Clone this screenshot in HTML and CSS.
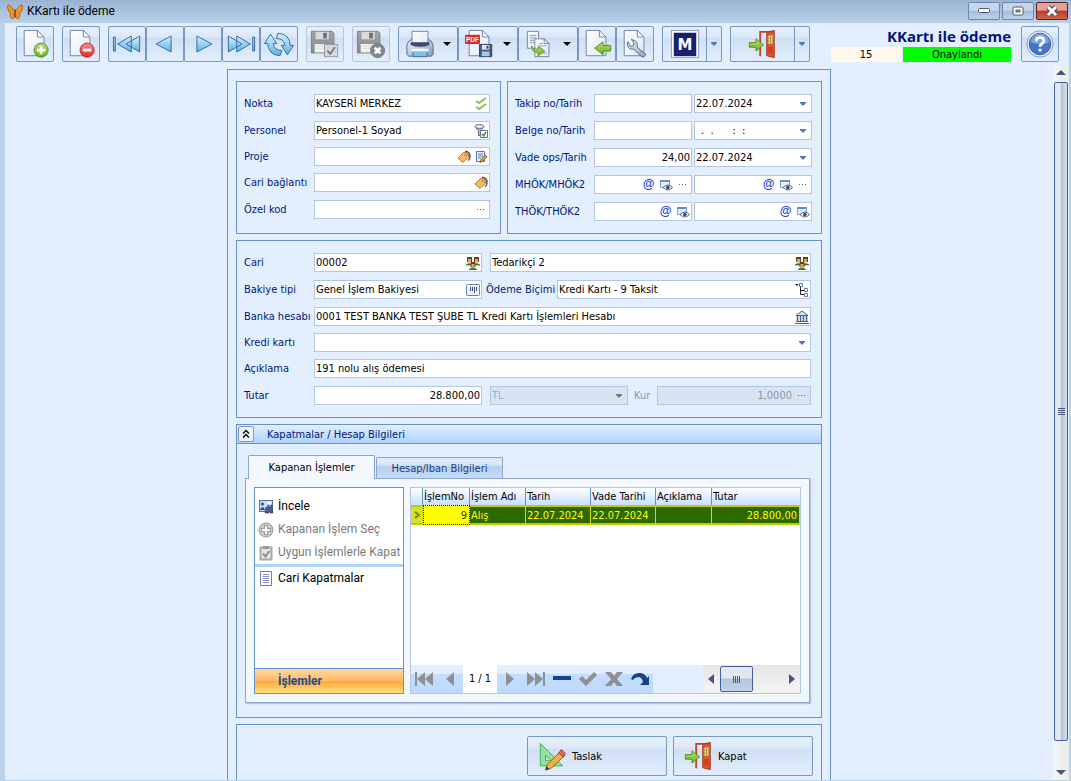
FILE: index.html
```html
<!DOCTYPE html>
<html lang="tr">
<head>
    <meta charset="UTF-8">
    <meta name="viewport" content="width=device-width, initial-scale=1.0">
    <title>KKartı ile ödeme</title>
    <link rel="stylesheet" href="styles.css">
</head>
<body>
    <!-- shared icons -->
    <svg class="sprite" aria-hidden="true">
        <defs>
            <linearGradient id="blue" x1="0" y1="0" x2="0" y2="1"><stop offset="0" stop-color="#d4f1fd"/><stop offset="1" stop-color="#5fb0e4"/></linearGradient>
            <linearGradient id="paper" x1="0" y1="0" x2="1" y2="1"><stop offset="0" stop-color="#fff"/><stop offset="1" stop-color="#e2e8f6"/></linearGradient>
            <linearGradient id="green" x1="0" y1="0" x2="0" y2="1"><stop offset="0" stop-color="#b6e36a"/><stop offset="1" stop-color="#6fae1f"/></linearGradient>
            <linearGradient id="red" x1="0" y1="0" x2="0" y2="1"><stop offset="0" stop-color="#ff8d8d"/><stop offset="1" stop-color="#e0262c"/></linearGradient>
            <linearGradient id="gray" x1="0" y1="0" x2="0" y2="1"><stop offset="0" stop-color="#a2a4a8"/><stop offset="1" stop-color="#86888c"/></linearGradient>
            <linearGradient id="steel" x1="0" y1="0" x2="1" y2="1"><stop offset="0" stop-color="#eef2f9"/><stop offset="1" stop-color="#8b9dbd"/></linearGradient>
        </defs>
        <symbol id="i-page" viewBox="0 0 32 32"><path d="M4.500 1.500h14l7 7v20h-21z" fill="url(#paper)" stroke="#6d7fb0"/><path d="M18.500 1.500v7h7z" fill="#fff" stroke="#6d7fb0"/></symbol>
        <symbol id="i-caret" viewBox="0 0 8 4"><path d="M0 0h8L4 4z"/></symbol>
        <symbol id="i-drop" viewBox="0 0 6 4"><path d="M0 0h6v1L3 4 0 1z" fill="#4f7ab3"/></symbol>
        <symbol id="i-dots" viewBox="0 0 10 2"><path d="M1 0h1v1H1zM4 0h1v1H4zM7 0h1v1H7z" fill="#3f6397"/></symbol>
        <symbol id="i-floppy" viewBox="0 0 32 32">
            <path d="M1.500 2.500h22l2 2v21h-24z" fill="url(#gray)" stroke="#7c7e82"/>
            <path d="M6 3h14v8H6z" fill="#d9dadc"/><path d="M14 4h4v6h-4z" fill="#6f7175"/>
            <path d="M5 16h17v9H5z" fill="#f2f3f4"/><path d="M7 18h13M7 20.500h13" stroke="#d2d3d5"/>
        </symbol>
        <symbol id="i-door" viewBox="0 0 32 32">
            <path d="M13 29V3h15" fill="none" stroke="#c8432a" stroke-width="2"/>
            <path d="M20 3.500l8-2v29l-8-2z" fill="#d9552b" stroke="#a8341c"/>
            <path d="M21.500 7l5-.5v9l-5 .5z" fill="#f3dfa8" stroke="#b9934a"/><path d="M24 7v9M21.500 10h5M21.500 13h5" stroke="#b9934a"/>
            <path d="M22 19l4 .5v7l-4-1z" fill="#c9431f"/>
            <path d="M1.500 14.500h7v-4l8 6.500-8 6.500v-4h-7z" fill="url(#green)" stroke="#4f8f1e"/>
        </symbol>
        <symbol id="i-people" viewBox="0 0 14 14">
            <path d="M0 9q3-3 6 0zM8 9q3-3 6 0zM3 14q4-5 8 0z" fill="#2f9a2f" stroke="#225f1d" stroke-width=".6"/>
            <path d="M1 1h5v5H1zM8 1h5v5H8zM4.500 6h5v5h-5z" fill="#6b3d18"/>
            <path d="M2 3h3v3.500H2zM9 3h3v3.500H9zM5.500 8h3v3.500h-3z" fill="#dba574"/>
        </symbol>
        <symbol id="i-tag" viewBox="0 0 14 14"><path d="M8 1.500q5 0 5 5 0 3-2 4" fill="none" stroke="#4a5068" stroke-width="1.500"/><path d="M1 8l5.500-5.500 4.500.2.500 4.300L6 12.500z" fill="#f9bb61" stroke="#b9752a"/><circle cx="9" cy="5" r="1" fill="#fff" stroke="#7a4b13" stroke-width=".6"/></symbol>
        <symbol id="i-eye" viewBox="0 0 14 14"><path d="M1.500 2.500h9v7h-9z" fill="#e9f0f9" stroke="#7f9cc4"/><path d="M1 2h10v2H1z" fill="#5f93ce"/><path d="M4 9.500q5-5 9.500 0-5 5-9.500 0z" fill="#eceff5" stroke="#59647e"/><circle cx="8.800" cy="9.500" r="1.800" fill="#39456a"/></symbol>
    </svg>

    <header class="titlebar">
        <svg class="app-icon" viewBox="0 0 16 16"><path d="M7.500 7L3 1.500Q0 0 .5 3.500L2 8l1.500 1L3 12l2 3 2-1.500zM8.500 7L13 1.500q3-1.500 2.500 2L14 8l-1.500 1 .5 3-2 3-2-1.500z" fill="#f7941d" stroke="#a3530a" stroke-width=".7"/><path d="M8 5v9" stroke="#5c2c08"/></svg>
        <span class="caption">KKartı ile ödeme</span>
        <div class="win-buttons">
            <button aria-label="Küçült"><svg width="12" height="6"><rect x=".5" y=".5" width="11" height="4" rx="1" fill="#fff" stroke="#4e5b6e"/></svg></button>
            <button aria-label="Büyüt"><svg width="12" height="10"><rect x="1" y="1" width="10" height="8" rx="1" fill="#fff" stroke="#4e5b6e" /><rect x="4" y="4" width="4" height="2" fill="#9fb4ce" stroke="#4e5b6e"/></svg></button>
            <button class="close" aria-label="Kapat"><svg width="14" height="12"><path d="M3 2l8 8M11 2l-8 8" stroke="#5a4048" stroke-width="5"/><path d="M3 2l8 8M11 2l-8 8" stroke="#fff" stroke-width="3"/></svg></button>
        </div>
    </header>

    <div class="window">
        <div class="toolbar">
            <div class="tools">
                <div class="group">
                    <button class="tool" aria-label="Yeni"><svg viewBox="0 0 32 32"><use href="#i-page"/><circle cx="22.500" cy="22.500" r="7.500" fill="url(#green)" stroke="#4e8a1a"/><path d="M22.500 18v9M18 22.500h9" stroke="#fff" stroke-width="3"/></svg></button>
                </div>
                <div class="group">
                    <button class="tool" aria-label="Sil"><svg viewBox="0 0 32 32"><use href="#i-page"/><circle cx="22.500" cy="22.500" r="7.500" fill="url(#red)" stroke="#b8292c"/><path d="M18 22.500h9" stroke="#fff" stroke-width="3"/></svg></button>
                </div>
                <div class="group">
                    <button class="tool" aria-label="İlk"><svg viewBox="0 0 32 32" fill="url(#blue)" stroke="#31689f"><path d="M1.500 8.500h2v15h-2zM20.500 7.500v17L6 16zM29.500 7.500v17L15 16z"/></svg></button>
                    <button class="tool" aria-label="Önceki"><svg viewBox="0 0 32 32" fill="url(#blue)" stroke="#31689f"><path d="M22.500 7.500v17L6.500 16z"/></svg></button>
                    <button class="tool" aria-label="Sonraki"><svg viewBox="0 0 32 32" fill="url(#blue)" stroke="#31689f"><path d="M9.500 7.500v17L25.500 16z"/></svg></button>
                    <button class="tool" aria-label="Son"><svg viewBox="0 0 32 32" fill="url(#blue)" stroke="#31689f"><path d="M28.500 8.500h2v15h-2zM11.500 7.500v17L26 16zM2.500 7.500v17L17 16z"/></svg></button>
                    <button class="tool" aria-label="Yenile"><svg viewBox="0 0 32 32" fill="url(#blue)" stroke="#31689f"><path d="M.5 15.500L7 5.500l6.500 10H10q0 7 9 7.500l-2 5.500Q4.500 27.500 4 15.500z"/><path d="M31.500 17.500L25 27.500l-6.500-10H22q0-7-9-7.500l2-5.500q12.500 1 13 13z"/></svg></button>
                </div>
                <div class="group">
                    <button class="tool" disabled aria-label="Kaydet"><svg viewBox="0 0 32 32"><use href="#i-floppy"/><rect x="15.500" y="16.500" width="14" height="13" fill="#d6d7d9" stroke="#9a9b9e"/><path d="M18.500 23l3 3.500 5-7" fill="none" stroke="#77797d" stroke-width="2"/></svg></button>
                </div>
                <div class="group">
                    <button class="tool" disabled aria-label="Vazgeç"><svg viewBox="0 0 32 32"><use href="#i-floppy"/><circle cx="23" cy="23" r="7.500" fill="#85878b" stroke="#77797d"/><path d="M20 20l6 6M26 20l-6 6" stroke="#fff" stroke-width="3"/></svg></button>
                </div>
                <div class="group">
                    <button class="tool with-menu" aria-label="Yazdır">
                        <svg viewBox="0 0 32 32"><path d="M4 13l3-2h18l3 2 2 4v10l-2 2H4l-2-2V17z" fill="url(#steel)" stroke="#53648c"/><path d="M7.500 2.500h17v13h-17z" fill="url(#paper)" stroke="#6d7fb0"/><path d="M6 14h20v3q-10 4-20 0z" fill="#3e4c6c"/><path d="M8.500 23.500h15v6h-15z" fill="#7fc0ee" stroke="#3f6fa6"/><path d="M7 21h18v3H7z" fill="#f6f8fc"/></svg>
                        <svg class="caret"><use href="#i-caret"/></svg>
                    </button>
                    <button class="tool with-menu" aria-label="PDF kaydet">
                        <svg viewBox="0 0 32 32"><use href="#i-page"/><rect x="0" y="6" width="16" height="10" rx="1" fill="#d32f30"/><text class="pdf-text" x="1" y="14">PDF</text><path d="M15.500 16.500h13v13h-13z" fill="#4a5a86" stroke="#2e3b60"/><path d="M18 17h8v5h-8z" fill="#dfe6f2"/><path d="M18 24h8v5h-8z" fill="#9fd0f0"/><path d="M23 18h2v3h-2z" fill="#2e3b60"/></svg>
                        <svg class="caret"><use href="#i-caret"/></svg>
                    </button>
                    <button class="tool with-menu" aria-label="Kopyala">
                        <svg viewBox="0 0 32 32"><path d="M2.500 2.500h12v18h-12z" fill="url(#paper)" stroke="#6d7fb0"/><path d="M5 7h7M5 9.500h7M5 12h5M5 14.500h5" stroke="#7f93c2"/><path d="M10.500 10.500h10l5 5v14h-15z" fill="url(#paper)" stroke="#6d7fb0"/><path d="M20.500 10.500v5h5z" fill="#fff" stroke="#6d7fb0"/><path d="M15 15.500h4M15 18h8M15 25.500h8" stroke="#7f93c2"/><path d="M7 18q1 4 7 3.500v-3.500l7 5.500-7 5v-3.500q-7 0-7-7z" fill="url(#green)" stroke="#5c951f"/></svg>
                        <svg class="caret"><use href="#i-caret"/></svg>
                    </button>
                    <button class="tool" aria-label="Aktar"><svg viewBox="0 0 32 32"><use href="#i-page"/><path d="M30.500 17.500h-8v-4l-9 7 9 7v-4h8z" fill="url(#green)" stroke="#4f8f1e"/></svg></button>
                    <button class="tool" aria-label="Ayarlar"><svg viewBox="0 0 32 32"><use href="#i-page"/><path d="M8.500 13.500q-2 5 2 7.500 2 1 4 .5l8.500 8q3.500 1 4.500-2.500l-9-7.500q1-6.500-5-8l-1.500-.5 3 4-1 3-3 .5z" fill="url(#steel)" stroke="#53648c"/></svg></button>
                </div>
                <div class="group">
                    <button class="tool split" aria-label="M"><svg viewBox="0 0 32 32"><rect x="1.500" y="1.500" width="29" height="29" fill="#fff" stroke="#8d9cc0"/><rect x="4" y="4" width="24" height="25" fill="#1a2070"/><text class="m-text" x="8" y="22">M</text></svg></button>
                    <button class="tool split-arrow" aria-label="M menüsü"><svg class="drop"><use href="#i-drop"/></svg></button>
                </div>
                <div class="group">
                    <button class="tool split exit" aria-label="Çıkış"><svg><use href="#i-door"/></svg></button>
                    <button class="tool split-arrow" aria-label="Çıkış menüsü"><svg class="drop"><use href="#i-drop"/></svg></button>
                </div>
            </div>
            <div class="status">
                <h1>KKartı ile ödeme</h1>
                <div class="status-line">
                    <span class="status-no">15</span>
                    <span class="status-state">Onaylandı</span>
                </div>
            </div>
            <button class="tool help" aria-label="Yardım"><svg viewBox="0 0 32 32"><circle cx="16" cy="16" r="14" fill="#e6ecf7" stroke="#8296bf"/><circle cx="16" cy="16" r="11.500" fill="#4577c6" stroke="#3560a8"/><path d="M6 14a10 9 0 0 1 20 0q-10 4-20 0z" fill="#7aa3e0"/><path d="M12 13q0-4 4-4t4 3.500q0 2-2 3.200T16 19" fill="none" stroke="#fff" stroke-width="3"/><rect x="14.500" y="21" width="3" height="3" fill="#fff"/></svg></button>
        </div>

        <div class="content">
            <main>
                <form class="form">
                    <div class="top-panels">
                        <section class="panel">
                            <div class="row">
                                <label for="nokta">Nokta</label>
                                <div class="field"><input id="nokta" value="KAYSERİ MERKEZ"><button type="button" class="in" aria-label="Nokta seç"><svg viewBox="0 0 14 14" fill="none" stroke="#8cc152" stroke-width="2"><path d="M2 4l3 2 7-5M2 10l3 2 7-5"/></svg></button></div>
                            </div>
                            <div class="row tight">
                                <label for="personel">Personel</label>
                                <div class="field"><input id="personel" value="Personel-1 Soyad"><button type="button" class="in" aria-label="Personel seç"><svg viewBox="0 0 14 14"><path d="M1 3l3.500 4v5l2-1V7L10 3z" fill="#b9c0cc" stroke="#66718a"/><ellipse cx="5.500" cy="2.500" rx="4.500" ry="2" fill="#e8ebf1" stroke="#66718a"/><path d="M6.500 6.500h7v7h-7z" fill="#fff" stroke="#6474a0"/><path d="M8 10l1.500 2L12 8" fill="none" stroke="#3b9a2c" stroke-width="1.500"/></svg></button></div>
                            </div>
                            <div class="row tight">
                                <label for="proje">Proje</label>
                                <div class="field"><input id="proje"><button type="button" class="in" aria-label="Proje seç"><svg><use href="#i-tag"/></svg></button><button type="button" class="in" aria-label="Proje düzenle"><svg viewBox="0 0 14 14"><path d="M2.500 1.500h8v10h-8z" fill="#eef4fc" stroke="#5577b0"/><path d="M4 4h5M4 6h5M4 8h3" stroke="#4a7fc4"/><path d="M6 12.500l1-3L11 5l2 2-4.500 4.500z" fill="#e79a3a" stroke="#8a5418" stroke-width=".8"/></svg></button></div>
                            </div>
                            <div class="row">
                                <label for="baglanti">Cari bağlantı</label>
                                <div class="field"><input id="baglanti"><button type="button" class="in" aria-label="Bağlantı seç"><svg><use href="#i-tag"/></svg></button></div>
                            </div>
                            <div class="row">
                                <label for="ozelkod">Özel kod</label>
                                <div class="field"><input id="ozelkod"><button type="button" class="in" aria-label="Özel kod seç"><svg class="dots"><use href="#i-dots"/></svg></button></div>
                            </div>
                        </section>

                        <section class="panel right">
                            <div class="row">
                                <label for="takip">Takip no/Tarih</label>
                                <div class="field"><input id="takip"></div>
                                <div class="field date"><input aria-label="Takip tarihi" value="22.07.2024"><button type="button" class="in" aria-label="Takvim"><svg class="drop"><use href="#i-drop"/></svg></button></div>
                            </div>
                            <div class="row">
                                <label for="belge">Belge no/Tarih</label>
                                <div class="field"><input id="belge"></div>
                                <div class="field date"><input aria-label="Belge tarihi" class="blank-date" value=". &nbsp;.&nbsp;&nbsp;&nbsp;&nbsp;&nbsp;&nbsp;: &nbsp;:"><button type="button" class="in" aria-label="Takvim"><svg class="drop"><use href="#i-drop"/></svg></button></div>
                            </div>
                            <div class="row">
                                <label for="vade">Vade ops/Tarih</label>
                                <div class="field"><input id="vade" class="num" value="24,00"></div>
                                <div class="field date"><input aria-label="Vade tarihi" value="22.07.2024"><button type="button" class="in" aria-label="Takvim"><svg class="drop"><use href="#i-drop"/></svg></button></div>
                            </div>
                            <div class="row">
                                <label for="mhok">MHÖK/MHÖK2</label>
                                <div class="field"><input id="mhok"><button type="button" class="in at">@</button><button type="button" class="in" aria-label="Göster"><svg><use href="#i-eye"/></svg></button><button type="button" class="in" aria-label="Seç"><svg class="dots"><use href="#i-dots"/></svg></button></div>
                                <div class="field date"><input aria-label="MHÖK2"><button type="button" class="in at">@</button><button type="button" class="in" aria-label="Göster"><svg><use href="#i-eye"/></svg></button><button type="button" class="in" aria-label="Seç"><svg class="dots"><use href="#i-dots"/></svg></button></div>
                            </div>
                            <div class="row">
                                <label for="thok">THÖK/THÖK2</label>
                                <div class="field"><input id="thok"><button type="button" class="in at">@</button><button type="button" class="in" aria-label="Göster"><svg><use href="#i-eye"/></svg></button></div>
                                <div class="field date"><input aria-label="THÖK2"><button type="button" class="in at">@</button><button type="button" class="in" aria-label="Göster"><svg><use href="#i-eye"/></svg></button></div>
                            </div>
                        </section>
                    </div>

                    <section class="panel">
                        <div class="row">
                            <label for="cari">Cari</label>
                            <div class="field half"><input id="cari" value="00002"><button type="button" class="in" aria-label="Cari seç"><svg><use href="#i-people"/></svg></button></div>
                            <div class="field"><input aria-label="Cari adı" value="Tedarikçi 2"><button type="button" class="in" aria-label="Cari seç"><svg><use href="#i-people"/></svg></button></div>
                        </div>
                        <div class="row">
                            <label for="bakiye">Bakiye tipi</label>
                            <div class="field half"><input id="bakiye" value="Genel İşlem Bakiyesi"><button type="button" class="in" aria-label="Bakiye tipi seç"><svg viewBox="0 0 14 14"><rect x=".5" y="1.500" width="13" height="11" rx="1" fill="#eef3fb" stroke="#6f7fb0"/><path d="M4.500 4v4M6.500 4v4M8.500 4v6M10.500 4v4" stroke="#3f4f86"/></svg></button></div>
                            <label class="second" for="odeme">Ödeme Biçimi</label>
                            <div class="field"><input id="odeme" value="Kredi Kartı - 9 Taksit"><button type="button" class="in" aria-label="Ödeme biçimi seç"><svg viewBox="0 0 14 14"><path d="M0 1h4L2 3z" fill="#222"/><path d="M5.500 2v9.500H10M5.500 7.500H10" fill="none" stroke="#222"/><path d="M4.500.5h3v3h-3zM9.500 5.500h3v3h-3zM9.500 10.500h3v3h-3z" fill="#fff" stroke="#6474a0"/></svg></button></div>
                        </div>
                        <div class="row tight">
                            <label for="banka">Banka hesabı</label>
                            <div class="field"><input id="banka" value="0001 TEST BANKA TEST ŞUBE TL Kredi Kartı İşlemleri Hesabı"><button type="button" class="in" aria-label="Banka hesabı seç"><svg viewBox="0 0 14 14"><path d="M1 5.500h12L7 1z" fill="#d6e4f4" stroke="#3a6598"/><path d="M2.500 6v5M5.500 6v5M8.500 6v5M11.500 6v5" stroke="#3a6598" stroke-width="1.500"/><path d="M1 11.500h12M0 13.500h14" stroke="#3a6598"/></svg></button></div>
                        </div>
                        <div class="row tight">
                            <label for="kart">Kredi kartı</label>
                            <div class="field"><select id="kart"><option></option></select><span class="in"><svg class="drop"><use href="#i-drop"/></svg></span></div>
                        </div>
                        <div class="row">
                            <label for="aciklama">Açıklama</label>
                            <div class="field"><input id="aciklama" value="191 nolu alış ödemesi"></div>
                        </div>
                        <div class="row">
                            <label for="tutar">Tutar</label>
                            <div class="field half"><input id="tutar" class="num" value="28.800,00"></div>
                            <div class="field currency off"><select aria-label="Para birimi" disabled><option>TL</option></select><span class="in"><svg class="drop"><use href="#i-drop"/></svg></span></div>
                            <label class="rate" for="kur">Kur</label>
                            <div class="field off"><input id="kur" class="num" value="1,0000" disabled><button type="button" class="in" disabled aria-label="Kur seç"><svg class="dots"><use href="#i-dots"/></svg></button></div>
                        </div>
                    </section>

                    <section class="panel closings">
                        <div class="closings-head">
                            <button type="button" class="collapse" aria-label="Daralt"><svg viewBox="0 0 8 10" fill="none" stroke="#111" stroke-width="1.500"><path d="M1 4.500l3-3 3 3M1 8.500l3-3 3 3"/></svg></button>
                            <h2>Kapatmalar / Hesap Bilgileri</h2>
                        </div>
                        <div class="tabs">
                            <button type="button" class="tab active">Kapanan İşlemler</button>
                            <button type="button" class="tab">Hesap/Iban Bilgileri</button>
                        </div>
                        <div class="tab-page">
                            <nav class="side">
                                <button type="button"><svg viewBox="0 0 16 16"><rect x="1.500" y="1.500" width="13" height="11" fill="#c6dcf5" stroke="#54719f"/><circle cx="4.500" cy="5" r="1.500" fill="#324a7c"/><path d="M2 11q2.500-6 5 0z" fill="#324a7c"/><path d="M9 4h4" stroke="#fff" stroke-width="2"/><path d="M8 8h2v-2h1v2h2v-2h1v2l1 6h-3v-3h-1v3H7z" fill="#4a5f92" stroke="#28395f" stroke-width=".6"/></svg>İncele</button>
                                <button type="button" disabled><svg viewBox="0 0 16 16"><circle cx="8" cy="8" r="7" fill="#c9c9c9" stroke="#9a9a9a"/><path d="M8 3v10M3 8h10" stroke="#9a9a9a" stroke-width="4"/><path d="M8 4v8M4 8h8" stroke="#fff" stroke-width="2"/></svg>Kapanan İşlem Seç</button>
                                <button type="button" disabled><svg viewBox="0 0 16 16"><path d="M2.500 2.500h11v12h-11z" fill="#e5e5e5" stroke="#aaa" stroke-width="2"/><path d="M5 1h6v3H5z" fill="#999"/><path d="M5 8.500l2.500 3L11.500 6" fill="none" stroke="#8d8d8d" stroke-width="2"/></svg>Uygun İşlemlerle Kapat</button>
                                <hr>
                                <button type="button"><svg viewBox="0 0 16 16"><path d="M2.500.5h11v14h-11z" fill="#fff" stroke="#6a7cb2"/><path d="M5 3.500h6M5 5.500h6M5 7.500h6M5 9.500h6M5 11.500h6" stroke="#8093c6"/></svg>Cari Kapatmalar</button>
                                <div class="side-foot">İşlemler</div>
                            </nav>
                            <div class="grid">
                                <table>
                                    <colgroup><col class="c-mark"><col class="c-no"><col class="c-name"><col class="c-date"><col class="c-date"><col class="c-note"><col></colgroup>
                                    <thead>
                                        <tr><th></th><th>İşlemNo</th><th>İşlem Adı</th><th>Tarih</th><th>Vade Tarihi</th><th>Açıklama</th><th>Tutar</th></tr>
                                    </thead>
                                    <tbody>
                                        <tr><td class="mark"><svg viewBox="0 0 6 8" width="6" height="8"><path d="M1 1l4 3-4 3" fill="none" stroke="#7c8a00" stroke-width="2"/></svg></td><td class="focus num">9</td><td>Alış</td><td>22.07.2024</td><td>22.07.2024</td><td></td><td class="num">28.800,00</td></tr>
                                    </tbody>
                                </table>
                                <div class="grid-foot">
                                    <button type="button" aria-label="İlk kayıt"><svg viewBox="0 0 20 16"><path d="M1 1h2v14H1zM11 1v14L3 8zM19 1v14l-8-7z"/></svg></button>
                                    <button type="button" aria-label="Önceki kayıt"><svg viewBox="0 0 20 16"><path d="M14 1v14L6 8z"/></svg></button>
                                    <span class="pos">1 / 1</span>
                                    <button type="button" aria-label="Sonraki kayıt"><svg viewBox="0 0 20 16"><path d="M6 1v14l8-7z"/></svg></button>
                                    <button type="button" aria-label="Son kayıt"><svg viewBox="0 0 20 16"><path d="M17 1h2v14h-2zM9 1v14l8-7zM1 1v14l8-7z"/></svg></button>
                                    <button type="button" class="on" aria-label="Kaydı sil"><svg viewBox="0 0 20 16"><path d="M1 5h18v4H1z"/></svg></button>
                                    <button type="button" aria-label="Onayla"><svg viewBox="0 0 20 16"><path d="M1 8l3-3 4 4 8-8 3 3L8 15z"/></svg></button>
                                    <button type="button" aria-label="İptal"><svg viewBox="0 0 20 16"><path d="M1 1h6l3 4 3-4h6l-6 7 6 7h-6l-3-4-3 4H1l6-7z"/></svg></button>
                                    <button type="button" class="on" aria-label="Tazele"><svg viewBox="0 0 20 16"><path d="M1 8Q3 2 9 2t8 5l2-2v9h-9l3-3q-1-5-5-5-3 0-5 3z"/></svg></button>
                                    <div class="hscroll">
                                        <svg viewBox="0 0 6 10"><path d="M6 0v10L0 5z"/></svg>
                                        <div class="hthumb"><i></i><i></i><i></i><i></i></div>
                                        <svg class="end" viewBox="0 0 6 10"><path d="M0 0v10l6-5z"/></svg>
                                    </div>
                                </div>
                            </div>
                        </div>
                    </section>

                    <section class="panel actions">
                        <button type="button" class="big"><svg viewBox="0 0 32 32"><path d="M2.500 2.500v24h24zM8 15v6h6z" fill="#8fe39c" fill-rule="evenodd" stroke="#3fae58"/><path d="M8 31l2-6L24 11l5 4-15 14z" fill="#f4b23e" stroke="#8a5a1a"/><path d="M22 13l3-4 4 4-2 4z" fill="#e06a5a" stroke="#99443a"/><path d="M8 31l1-4 3 3z" fill="#333"/></svg>Taslak</button>
                        <button type="button" class="big"><svg><use href="#i-door"/></svg>Kapat</button>
                    </section>
                </form>
            </main>
            <div class="vscroll">
                <svg viewBox="0 0 10 5"><path d="M0 5h10L5 0z"/></svg>
                <div class="vthumb"><i></i><i></i><i></i><i></i></div>
                <svg viewBox="0 0 10 5"><path d="M0 0h10L5 5z"/></svg>
            </div>
        </div>
    </div>
</body>
</html>
```

FILE: styles.css
```css
* {
    box-sizing: border-box;
}

body {
    margin: 0;
    height: 100vh;
    overflow: hidden;
    display: flex;
    flex-direction: column;
    background-color: #b9d1ea;
    color: #000;
    font-family: "DejaVu Sans Condensed", "DejaVu Sans", sans-serif;
    font-size: 11px;
    line-height: 15px;
}

button, input, select {
    font: inherit;
    color: inherit;
    margin: 0;
    padding: 0;
}

svg {
    display: block;
    flex: none;
}

.sprite {
    position: absolute;
    width: 0;
    height: 0;
}

/* title bar */
.titlebar {
    display: flex;
    align-items: center;
    height: 23px;
    padding: 0 3px 0 7px;
    background: linear-gradient(#99b4d1, #b9d1ea);
    flex: none;
}

.app-icon {
    width: 16px;
    height: 16px;
}

.caption {
    flex: 1;
    margin-left: 4px;
    font-family: Roboto, sans-serif;
    font-size: 12px;
}

.win-buttons {
    display: flex;
    align-self: flex-start;
    gap: 2px;
    padding-top: 2px;
}

.win-buttons button {
    display: flex;
    align-items: center;
    justify-content: center;
    width: 32px;
    height: 18px;
    border: 1px solid #6c87ab;
    border-radius: 2px;
    background: linear-gradient(#c5d6ea 45%, #a5bdd8 50%, #bdd2ea);
}

.win-buttons .close {
    border-color: #5b1f26;
    background: linear-gradient(#e3a196 45%, #bb3b26 50%, #d1664a);
}

.window {
    flex: 1;
    min-height: 0;
    display: flex;
    flex-direction: column;
    margin: 0 2px 1px 5px;
    background-color: #e3efff;
}

/* toolbar */
.toolbar {
    display: flex;
    align-items: flex-start;
    padding: 3px 10px 3px 11px;
}

.tools {
    display: flex;
    flex: 1;
    gap: 8px;
}

.group {
    display: flex;
}

.tool, .big {
    display: flex;
    align-items: center;
    justify-content: center;
    border: 1px solid #7897c4;
    border-radius: 2px;
    background: linear-gradient(#e6f0fd, #dce8f8 30%, #cfdff3 32%, #e2eefd);
}

.tool {
    width: 38px;
    height: 36px;
}

.tool svg {
    width: 30px;
    height: 30px;
}

.tool:disabled {
    border-color: #b9c6d8;
}

.with-menu {
    width: 60px;
    gap: 8px;
}

.tool .caret {
    width: 8px;
    height: 4px;
}

.split {
    width: 44px;
    border-right: 0;
    border-radius: 2px 0 0 2px;
}

.exit {
    width: 64px;
}

.split-arrow {
    width: 16px;
    border-radius: 0 2px 2px 0;
}

.drop, .tool .drop {
    width: 6px;
    height: 4px;
}

.pdf-text {
    font: bold 7px "Liberation Sans", sans-serif;
    fill: #fff;
}

.m-text {
    font: bold 16px "DejaVu Sans", sans-serif;
    fill: #fff;
}

.status {
    width: 180px;
    margin-right: 10px;
}

.status h1 {
    margin: 0;
    height: 21px;
    color: #00147a;
    font: bold 15px/21px "Open Sans", sans-serif;
    text-align: right;
    white-space: nowrap;
}

.status-line {
    display: flex;
    gap: 2px;
    text-align: center;
}

.status-no {
    width: 70px;
    background-color: #fffaf0;
}

.status-state {
    flex: 1;
    background-color: #0f0;
}

/* form */
.content {
    flex: 1;
    min-height: 0;
    display: flex;
}

main {
    flex: 1;
    overflow: hidden;
    padding-top: 4px;
}

.form {
    max-width: 604px;
    margin: 0 auto;
    padding: 11px 8px;
    border: 1px solid #6593cf;
    display: flex;
    flex-direction: column;
    gap: 6px;
}

.top-panels {
    display: grid;
    grid-template-columns: 265fr 315fr;
    gap: 6px;
}

.panel {
    min-width: 0;
    border: 1px solid #6593cf;
    padding: 12px 10px 4px 7px;
}

.panel.right {
    padding-right: 9px;
}

.row {
    display: flex;
    align-items: center;
    margin-bottom: 8px;
}

.row.tight {
    margin-bottom: 7px;
}

.row label {
    width: 70px;
    flex: none;
    color: #00187a;
    white-space: nowrap;
}

.right .row label {
    width: 79px;
}

.row .second {
    width: 71px;
}

.row .rate {
    width: 23px;
    color: #8d96a5;
}

.field {
    flex: 1;
    min-width: 0;
    display: flex;
    height: 19px;
    border: 1px solid #b3c7e4;
    background-color: #fff;
}

.panel > .row > .half {
    flex: 0 0 168px;
}

.half + .field {
    margin-left: 8px;
}

.half + .second {
    margin-left: 4px;
}

.right .row .date {
    flex: 0 0 118px;
    margin-left: 2px;
}

.panel > .row > .currency {
    flex: 0 0 138px;
    margin-right: 6px;
}

.field input, .field select {
    flex: 1;
    width: 0;
    min-width: 0;
    border: 0;
    outline: 0;
    padding: 0 1px;
    background: transparent;
    appearance: none;
}

.field .num, .num {
    text-align: right;
}

.field .blank-date {
    padding-left: 6px;
}

.field.off {
    background-color: #d8e4f3;
    color: #8d96a5;
}

.off .in {
    filter: grayscale(1);
}

.in {
    display: flex;
    align-items: center;
    justify-content: center;
    width: 17px;
    border: 0;
    background: none;
    flex: none;
}

.in svg {
    width: 14px;
    height: 14px;
}

.in .drop {
    width: 6px;
    height: 4px;
}

.in .dots {
    width: 10px;
    height: 2px;
}

.at {
    color: #1f3fe0;
    font-family: "Liberation Sans", sans-serif;
    font-size: 12px;
    font-weight: bold;
}

/* collapsible panel */
.panel.closings {
    padding: 0;
}

.closings-head {
    display: flex;
    align-items: center;
    height: 19px;
    padding-left: 1px;
    border-bottom: 1px solid #6593cf;
    background: linear-gradient(#e3efff, #afd2ff);
}

.collapse {
    display: flex;
    align-items: center;
    justify-content: center;
    width: 16px;
    height: 16px;
    border: 1px solid #8299bd;
    border-radius: 2px;
    background-color: #eaf2fd;
}

.collapse svg {
    width: 8px;
    height: 10px;
}

.closings h2 {
    margin: 0 0 0 13px;
    color: #00187a;
    font-size: 11px;
    font-weight: normal;
}

.tabs {
    display: flex;
    align-items: flex-end;
    gap: 1px;
    padding: 11px 11px 0;
}

.tab {
    width: 127px;
    height: 21px;
    border: 1px solid #8da5cf;
    border-bottom: 0;
    border-radius: 2px 2px 0 0;
    background: linear-gradient(#dbe9fc 30%, #b6cff0 45%, #c5dcf8);
    color: #1e3c7b;
}

.tab.active {
    position: relative;
    height: 24px;
    margin-bottom: -1px;
    background: #f3f8ff;
    color: #000;
}

.tab-page {
    display: flex;
    gap: 6px;
    height: 225px;
    margin: 0 11px 14px 8px;
    padding: 8px;
    border: 1px solid #8da5cf;
    background-color: #f3f8ff;
    box-shadow: 1px 1px 1px #b4c3dc;
}

.side {
    display: flex;
    flex-direction: column;
    width: 150px;
    padding-top: 7px;
    border: 1px solid #6593cf;
    background-color: #fff;
    font-family: Roboto, sans-serif;
    font-size: 12px;
}

.side button {
    display: flex;
    align-items: center;
    gap: 4px;
    height: 23px;
    padding-left: 3px;
    border: 0;
    background: none;
    white-space: nowrap;
}

.side button:disabled {
    color: #7b7b7b;
}

.side button svg {
    width: 16px;
    height: 16px;
}

.side hr {
    width: 100%;
    height: 3px;
    margin: 0;
    border: 0;
    background-color: #afd2ff;
}

.side-foot {
    margin-top: auto;
    height: 25px;
    padding-left: 23px;
    border-top: 1px solid #6593cf;
    background: linear-gradient(#ffd9a8, #ffba66 48%, #ffa63a 50%, #ffe07a);
    color: #204d89;
    font-weight: bold;
    line-height: 24px;
}

.grid {
    flex: 1;
    min-width: 0;
    display: flex;
    flex-direction: column;
    justify-content: space-between;
    border: 1px solid #b0c8e6;
    background-color: #fff;
}

.grid table {
    width: 100%;
    table-layout: fixed;
    border-collapse: separate;
    border-spacing: 0;
}

.c-mark {
    width: 12px;
}

.c-no {
    width: 47px;
}

.c-name {
    width: 56px;
}

.c-date {
    width: 65px;
}

.c-note {
    width: 56px;
}

.grid th {
    height: 17px;
    padding: 0 0 0 1px;
    border-right: 1px solid #6593cf;
    background: linear-gradient(#fff, #c7dfff);
    font-weight: normal;
    text-align: left;
    white-space: nowrap;
}

.grid th:last-child {
    border-right: 0;
}

.grid td {
    height: 20px;
    padding: 0 2px 0 1px;
    border: 1px solid #d8dc00;
    border-left: 0;
    border-top: 2px solid #c3cc00;
    border-bottom: 2px solid #c3cc00;
    background-color: #2d6800;
    color: #ff0;
    white-space: nowrap;
}

.grid td.focus {
    background-color: #ff0;
    color: #333;
    border: 1px dotted #222;
}

.grid td.mark {
    padding: 0 0 0 3px;
    background-color: #d5e028;
}

.grid-foot {
    display: flex;
    height: 28px;
    background-color: #e3efff;
}

.grid-foot button {
    display: flex;
    align-items: center;
    justify-content: center;
    width: 26px;
    border: 0;
    background: linear-gradient(#e3efff 30%, #c4ddff 32%, #bfdaff);
    fill: #8e9094;
}

.grid-foot .on {
    fill: #15428b;
}

.grid-foot button svg {
    width: 20px;
    height: 16px;
}

.pos {
    width: 34px;
    background-color: #fff;
    line-height: 28px;
    text-align: center;
}

.hscroll {
    display: flex;
    align-items: center;
    width: 97px;
    margin-left: auto;
    padding: 0 5px;
    background: linear-gradient(#e6e6e6, #f4f4f4);
    fill: #46557e;
}

.hscroll svg {
    width: 6px;
    height: 10px;
}

.hscroll .end {
    margin-left: auto;
}

.hthumb, .vthumb {
    display: flex;
    align-items: center;
    justify-content: center;
    gap: 1px;
    border: 1px solid #45619b;
    border-radius: 2px;
}

.hthumb {
    width: 33px;
    height: 26px;
    margin-left: 6px;
    background: linear-gradient(#e3e8ee 45%, #b3c6de 50%, #c3d2e5);
}

.hthumb i {
    width: 1px;
    height: 7px;
    background-color: #45557e;
}

.vscroll {
    display: flex;
    flex-direction: column;
    align-items: center;
    width: 16px;
    padding: 5px 0;
    background: linear-gradient(90deg, #f4f4f4, #ececec);
    fill: #46557e;
}

.vscroll svg {
    width: 10px;
    height: 5px;
}

.vthumb {
    flex: 1;
    flex-direction: column;
    width: 14px;
    margin: 7px 0 29px;
    background: linear-gradient(90deg, #e3e8ee 45%, #b3c6de 50%, #d3dfed);
}

.vthumb i {
    width: 7px;
    height: 1px;
    background-color: #45557e;
}

.actions {
    display: flex;
    justify-content: flex-end;
    gap: 6px;
    padding: 11px 8px;
}

.big {
    justify-content: flex-start;
    gap: 4px;
    width: 140px;
    height: 40px;
    padding-left: 10px;
}

.big svg {
    width: 30px;
    height: 30px;
}
```
